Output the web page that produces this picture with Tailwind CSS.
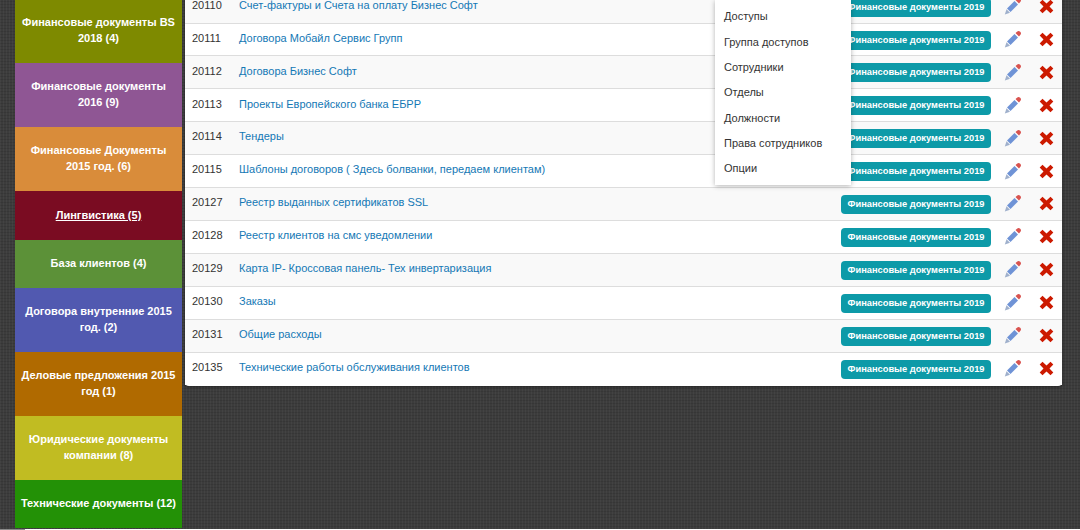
<!DOCTYPE html>
<html lang="en">
<head>
    <meta charset="UTF-8">
    <title>Документы</title>
    <script src="https://cdn.jsdelivr.net/npm/@tailwindcss/browser@4"></script>
</head>
<body class="h-[530px] overflow-hidden bg-[#3c3c3c] bg-[repeating-linear-gradient(90deg,rgba(255,255,255,0.035)_0,rgba(255,255,255,0.035)_1px,transparent_1px,transparent_3px),repeating-linear-gradient(0deg,rgba(0,0,0,0.1)_0,rgba(0,0,0,0.1)_1px,transparent_1px,transparent_3px)] font-['Liberation_Sans',Arial,sans-serif]">

    <svg class="hidden">
        <symbol id="pencil" viewBox="0 0 17 17">
            <path d="M3 10.500 10.500 3l3.500 3.500-7.500 7.500z" fill="#6f93d6"/>
            <path d="M11.500 2 13 .8a1.900 1.900 0 0 1 3.200 3.200L15 5.500z" fill="#d9534f"/>
            <path d="M.8 16.500l1.700-5.300 3.500 3.500z" fill="#9fb0cc"/>
        </symbol>
        <symbol id="cross" viewBox="0 0 15 15">
            <path d="M3.500.8 7.500 4.500 11.500.8 14.300 3.500 10.500 7.500 14.300 11.500 11.500 14.300 7.500 10.500 3.500 14.300.7 11.500 4.500 7.500.7 3.500z" fill="#cc1a00"/>
        </symbol>
    </svg>

    <div class="relative flex h-[530px] items-start pl-[15px]">
        <!-- categories -->
        <aside class="-mt-px w-[167px] shrink-0 text-center text-[11px] font-bold leading-4 text-white">
            <a class="flex h-16 items-center justify-center bg-[#7e8a00] px-1 pb-[2px]" href="#">Финансовые документы BS 2018 (4)</a>
            <a class="flex h-16 items-center justify-center bg-[#8f5694] px-3 pb-[2px]" href="#">Финансовые документы 2016 (9)</a>
            <a class="flex h-16 items-center justify-center bg-[#d98c3a] px-3 pb-[2px]" href="#">Финансовые Документы 2015 год. (6)</a>
            <a class="flex h-[49px] items-center justify-center bg-[#7a0c22] px-3 pb-[2px] underline" href="#">Лингвистика (5)</a>
            <a class="flex h-12 items-center justify-center bg-[#5c9138] px-3 pb-[2px]" href="#">База клиентов (4)</a>
            <a class="flex h-16 items-center justify-center bg-[#5159b0] px-2 pb-[2px]" href="#">Договора внутренние 2015 год. (2)</a>
            <a class="flex h-16 items-center justify-center bg-[#b06a00] px-1 pb-[2px]" href="#">Деловые предложения 2015 год (1)</a>
            <a class="flex h-16 items-center justify-center bg-[#c1bc22] px-3 pb-[2px]" href="#">Юридические документы компании (8)</a>
            <a class="flex h-12 items-center justify-center bg-[#239106] px-1 pb-[2px]" href="#">Технические документы (12)</a>
        </aside>

        <!-- table -->
        <main class="ml-[3px] -mt-[9.300px] w-[877px] rounded-b-sm bg-white pb-px text-[11px] text-[#333] shadow-[0_1px_3px_rgba(0,0,0,0.4)]">
            <div class="flex h-[32.900px] items-center border-b border-[#ddd] bg-[#f9f9f9] pl-[7px]">
                <span class="mb-[3px] w-[47px]">20110</span>
                <a class="mb-[3px] flex-1 text-[#1478b5]" href="#">Счет-фактуры и Счета на оплату Бизнес Софт</a>
                <span class="mr-[13px] mt-px rounded bg-[#0d9aa8] px-[6.500px] py-[3px] text-[9.300px] font-bold leading-[13px] text-white">Финансовые документы 2019</span>
                <svg class="mr-[18px] h-[17px] w-[17px]"><use href="#pencil"/></svg>
                <svg class="mr-[8px] h-[15px] w-[15px]"><use href="#cross"/></svg>
            </div>
            <div class="flex h-[32.900px] items-center border-b border-[#ddd] bg-white pl-[7px]">
                <span class="mb-[3px] w-[47px]">20111</span>
                <a class="mb-[3px] flex-1 text-[#1478b5]" href="#">Договора Мобайл Сервис Групп</a>
                <span class="mr-[13px] mt-px rounded bg-[#0d9aa8] px-[6.500px] py-[3px] text-[9.300px] font-bold leading-[13px] text-white">Финансовые документы 2019</span>
                <svg class="mr-[18px] h-[17px] w-[17px]"><use href="#pencil"/></svg>
                <svg class="mr-[8px] h-[15px] w-[15px]"><use href="#cross"/></svg>
            </div>
            <div class="flex h-[32.900px] items-center border-b border-[#ddd] bg-[#f9f9f9] pl-[7px]">
                <span class="mb-[3px] w-[47px]">20112</span>
                <a class="mb-[3px] flex-1 text-[#1478b5]" href="#">Договора Бизнес Софт</a>
                <span class="mr-[13px] mt-px rounded bg-[#0d9aa8] px-[6.500px] py-[3px] text-[9.300px] font-bold leading-[13px] text-white">Финансовые документы 2019</span>
                <svg class="mr-[18px] h-[17px] w-[17px]"><use href="#pencil"/></svg>
                <svg class="mr-[8px] h-[15px] w-[15px]"><use href="#cross"/></svg>
            </div>
            <div class="flex h-[32.900px] items-center border-b border-[#ddd] bg-white pl-[7px]">
                <span class="mb-[3px] w-[47px]">20113</span>
                <a class="mb-[3px] flex-1 text-[#1478b5]" href="#">Проекты Европейского банка ЕБРР</a>
                <span class="mr-[13px] mt-px rounded bg-[#0d9aa8] px-[6.500px] py-[3px] text-[9.300px] font-bold leading-[13px] text-white">Финансовые документы 2019</span>
                <svg class="mr-[18px] h-[17px] w-[17px]"><use href="#pencil"/></svg>
                <svg class="mr-[8px] h-[15px] w-[15px]"><use href="#cross"/></svg>
            </div>
            <div class="flex h-[32.900px] items-center border-b border-[#ddd] bg-[#f9f9f9] pl-[7px]">
                <span class="mb-[3px] w-[47px]">20114</span>
                <a class="mb-[3px] flex-1 text-[#1478b5]" href="#">Тендеры</a>
                <span class="mr-[13px] mt-px rounded bg-[#0d9aa8] px-[6.500px] py-[3px] text-[9.300px] font-bold leading-[13px] text-white">Финансовые документы 2019</span>
                <svg class="mr-[18px] h-[17px] w-[17px]"><use href="#pencil"/></svg>
                <svg class="mr-[8px] h-[15px] w-[15px]"><use href="#cross"/></svg>
            </div>
            <div class="flex h-[32.900px] items-center border-b border-[#ddd] bg-white pl-[7px]">
                <span class="mb-[3px] w-[47px]">20115</span>
                <a class="mb-[3px] flex-1 text-[#1478b5]" href="#">Шаблоны договоров ( Здесь болванки, передаем клиентам)</a>
                <span class="mr-[13px] mt-px rounded bg-[#0d9aa8] px-[6.500px] py-[3px] text-[9.300px] font-bold leading-[13px] text-white">Финансовые документы 2019</span>
                <svg class="mr-[18px] h-[17px] w-[17px]"><use href="#pencil"/></svg>
                <svg class="mr-[8px] h-[15px] w-[15px]"><use href="#cross"/></svg>
            </div>
            <div class="flex h-[32.900px] items-center border-b border-[#ddd] bg-[#f9f9f9] pl-[7px]">
                <span class="mb-[3px] w-[47px]">20127</span>
                <a class="mb-[3px] flex-1 text-[#1478b5]" href="#">Реестр выданных сертификатов SSL</a>
                <span class="mr-[13px] mt-px rounded bg-[#0d9aa8] px-[6.500px] py-[3px] text-[9.300px] font-bold leading-[13px] text-white">Финансовые документы 2019</span>
                <svg class="mr-[18px] h-[17px] w-[17px]"><use href="#pencil"/></svg>
                <svg class="mr-[8px] h-[15px] w-[15px]"><use href="#cross"/></svg>
            </div>
            <div class="flex h-[32.900px] items-center border-b border-[#ddd] bg-white pl-[7px]">
                <span class="mb-[3px] w-[47px]">20128</span>
                <a class="mb-[3px] flex-1 text-[#1478b5]" href="#">Реестр клиентов на смс уведомлении</a>
                <span class="mr-[13px] mt-px rounded bg-[#0d9aa8] px-[6.500px] py-[3px] text-[9.300px] font-bold leading-[13px] text-white">Финансовые документы 2019</span>
                <svg class="mr-[18px] h-[17px] w-[17px]"><use href="#pencil"/></svg>
                <svg class="mr-[8px] h-[15px] w-[15px]"><use href="#cross"/></svg>
            </div>
            <div class="flex h-[32.900px] items-center border-b border-[#ddd] bg-[#f9f9f9] pl-[7px]">
                <span class="mb-[3px] w-[47px]">20129</span>
                <a class="mb-[3px] flex-1 text-[#1478b5]" href="#">Карта IP- Кроссовая панель- Тех инвертаризация</a>
                <span class="mr-[13px] mt-px rounded bg-[#0d9aa8] px-[6.500px] py-[3px] text-[9.300px] font-bold leading-[13px] text-white">Финансовые документы 2019</span>
                <svg class="mr-[18px] h-[17px] w-[17px]"><use href="#pencil"/></svg>
                <svg class="mr-[8px] h-[15px] w-[15px]"><use href="#cross"/></svg>
            </div>
            <div class="flex h-[32.900px] items-center border-b border-[#ddd] bg-white pl-[7px]">
                <span class="mb-[3px] w-[47px]">20130</span>
                <a class="mb-[3px] flex-1 text-[#1478b5]" href="#">Заказы</a>
                <span class="mr-[13px] mt-px rounded bg-[#0d9aa8] px-[6.500px] py-[3px] text-[9.300px] font-bold leading-[13px] text-white">Финансовые документы 2019</span>
                <svg class="mr-[18px] h-[17px] w-[17px]"><use href="#pencil"/></svg>
                <svg class="mr-[8px] h-[15px] w-[15px]"><use href="#cross"/></svg>
            </div>
            <div class="flex h-[32.900px] items-center border-b border-[#ddd] bg-[#f9f9f9] pl-[7px]">
                <span class="mb-[3px] w-[47px]">20131</span>
                <a class="mb-[3px] flex-1 text-[#1478b5]" href="#">Общие расходы</a>
                <span class="mr-[13px] mt-px rounded bg-[#0d9aa8] px-[6.500px] py-[3px] text-[9.300px] font-bold leading-[13px] text-white">Финансовые документы 2019</span>
                <svg class="mr-[18px] h-[17px] w-[17px]"><use href="#pencil"/></svg>
                <svg class="mr-[8px] h-[15px] w-[15px]"><use href="#cross"/></svg>
            </div>
            <div class="flex h-[32.900px] items-center bg-white pl-[7px]">
                <span class="mb-[3px] w-[47px]">20135</span>
                <a class="mb-[3px] flex-1 text-[#1478b5]" href="#">Технические работы обслуживания клиентов</a>
                <span class="mr-[13px] mt-px rounded bg-[#0d9aa8] px-[6.500px] py-[3px] text-[9.300px] font-bold leading-[13px] text-white">Финансовые документы 2019</span>
                <svg class="mr-[18px] h-[17px] w-[17px]"><use href="#pencil"/></svg>
                <svg class="mr-[8px] h-[15px] w-[15px]"><use href="#cross"/></svg>
            </div>
        </main>

        <!-- user menu -->
        <div class="absolute left-[715px] top-0 h-[185px] w-[136px] bg-white pl-[9px] pt-[4.400px] text-[11px] leading-[25.300px] text-[#333] shadow-[0_1px_5px_rgba(0,0,0,0.3)]">
            <div>Доступы</div>
            <div>Группа доступов</div>
            <div>Сотрудники</div>
            <div>Отделы</div>
            <div>Должности</div>
            <div>Права сотрудников</div>
            <div>Опции</div>
        </div>

        <!-- strip at the bottom edge of the page -->
        <div class="absolute bottom-0 left-0 flex h-px w-full">
            <div class="w-[25px] bg-[#8a8a8a]"></div>
            <div class="flex-1 bg-white"></div>
        </div>
    </div>
</body>
</html>
